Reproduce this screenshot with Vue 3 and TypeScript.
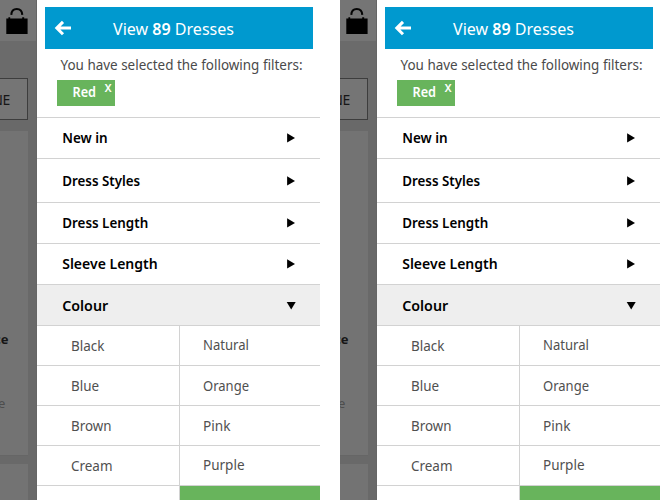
<script setup lang="ts">
interface Row { label: string; height: number; fit: number; open?: boolean }
interface Colour { label: string; fit: number; raised?: boolean }

const screens: number[] = [1, 2]
const rows: Row[] = [
  { label: 'New in', height: 41, fit: 45.5 },
  { label: 'Dress Styles', height: 44, fit: 78 },
  { label: 'Dress Length', height: 41, fit: 86 },
  { label: 'Sleeve Length', height: 41, fit: 95.5 },
  { label: 'Colour', height: 41, fit: 46, open: true },
]
const colours: Colour[] = [
  { label: 'Black', fit: 33.5 },
  { label: 'Natural', fit: 46, raised: true },
  { label: 'Blue', fit: 28 },
  { label: 'Orange', fit: 46 },
  { label: 'Brown', fit: 40.5 },
  { label: 'Pink', fit: 27.5 },
  { label: 'Cream', fit: 41.5 },
  { label: 'Purple', fit: 41.5, raised: true },
]
</script>

<template>
  <main class="board">
    <section v-for="screen in screens" :key="screen" class="phone">
      <aside class="backdrop">
        <div class="topbar">
          <svg class="bag" width="22" height="27" viewBox="0 0 22 27">
            <path d="M0.3 10.4H2.4V9.2H4.2V10.4H16.2V9.2H18.2V10.4H21.6V25.9H0.3Z" fill="#000" />
            <path d="M5.3 6.9C5.4 3 7.5 0.9 10.8 0.9S16.1 3 16.3 6.9" fill="none" stroke="#050505" stroke-width="2" />
          </svg>
        </div>
        <div class="toolbar"><div class="outline">NE</div></div>
        <div class="product">
          <span class="name">ce</span>
          <span class="price">e</span>
        </div>
        <div class="product next"></div>
      </aside>
      <div class="panel">
        <header class="title">
          <svg class="back" width="17" height="15" viewBox="0 0 17 15">
            <path d="M8 0.9L1.8 7.1L8 13.3M2 7.1H16" fill="none" stroke="#fff" stroke-width="3" />
          </svg>
          <svg class="fitted" width="124" height="28">
            <text x="1" y="21" textLength="121" lengthAdjust="spacingAndGlyphs">View <tspan class="count">89</tspan> Dresses</text>
          </svg>
        </header>
        <div class="selection">
          <svg class="intro" width="245" height="20">
            <text x="0.5" y="14" textLength="242" lengthAdjust="spacingAndGlyphs">You have selected the following filters:</text>
          </svg>
          <div class="tag">
            <svg width="26" height="20"><text x="0.5" y="14.4" textLength="23.5" lengthAdjust="spacingAndGlyphs">Red</text></svg>
            <svg class="close" width="8" height="14"><text x="-0.6" y="9.2" textLength="7.2" lengthAdjust="spacingAndGlyphs">x</text></svg>
          </div>
        </div>
        <div
          v-for="row in rows"
          :key="row.label"
          class="row"
          :class="{ open: row.open }"
          :style="{ height: row.height + 'px' }"
        >
          <svg class="label" width="110" height="20">
            <text x="0.2" y="15" :textLength="row.fit" lengthAdjust="spacingAndGlyphs">{{ row.label }}</text>
          </svg>
          <svg class="arrow" width="10" height="10" viewBox="0 0 10 10">
            <path :d="row.open ? 'M0.7 1H9.7L5.2 8.6Z' : 'M1.1 0.3V9.5L9 4.9Z'" />
          </svg>
        </div>
        <div class="colours">
          <div v-for="colour in colours" :key="colour.label" class="cell" :class="{ raised: colour.raised }">
            <svg width="70" height="20">
              <text x="0" y="15" :textLength="colour.fit" lengthAdjust="spacingAndGlyphs">{{ colour.label }}</text>
            </svg>
          </div>
          <div class="cell"></div>
          <div class="cell chosen"></div>
        </div>
      </div>
    </section>
  </main>
</template>

<style>
body { background: #fff; overflow: hidden; }
</style>

<style scoped>
* { box-sizing: border-box; }
svg { display: block; flex: none; overflow: visible; }
.board { display: flex; gap: 20px; width: 660px; height: 500px; overflow: hidden; font-family: "Noto Sans", "Open Sans", sans-serif; }
.phone { display: flex; width: 320px; height: 500px; overflow: hidden; }
.backdrop { width: 37px; height: 500px; flex: none; overflow: hidden; background: #696969; border-right: 1px solid #666; }
.topbar { height: 41px; padding: 8px 0 0 6px; background: #757575; }
.toolbar { height: 79px; padding-top: 37px; background: #6b6b6b; }
.outline { width: 28px; height: 42px; border: 1px solid #3d3d3d; border-left: 0; background: #757575; display: flex; align-items: center; justify-content: flex-end; padding-right: 17px; color: #161616; font-size: 14px; letter-spacing: -0.3px; }
.product { width: 28px; height: 325px; margin-top: 11px; background: #737373; border-bottom: 1px solid #666; display: flex; flex-direction: column; }
.name { margin: 198px 0 0 -6px; color: #161616; font: bold 13px/20px "Noto Sans", sans-serif; }
.price { margin: 44px 0 0 -2px; color: #4d4d4d; font: 13px/20px "Noto Sans", sans-serif; }
.next { margin-top: 8px; height: 50px; }
.panel { width: 283px; flex: none; background: #fff; padding-top: 7px; }
.title { display: flex; align-items: center; width: 268px; height: 42px; margin-left: 8px; padding-left: 10px; background: #0099cf; }
.title .fitted { margin-left: 40px; }
.title text { fill: #fff; font-size: 16.8px; }
.title .count { font-weight: 600; }
.selection { height: 69px; padding: 7px 0 0 20px; border-bottom: 1px solid #d2d2d2; }
.intro { margin-left: 3px; }
.intro text { fill: #4a4a4a; font-size: 14.4px; }
.tag { display: flex; width: 58px; height: 26px; margin-top: 4px; padding: 3px 0 0 15px; background: #68b45c; }
.tag text { fill: #fff; font-size: 14px; font-weight: 600; }
.tag .close { margin-left: 7px; }
.tag .close text { font-size: 14.5px; font-weight: 500; }
.row { display: flex; align-items: center; justify-content: space-between; padding: 0 24px 0 25px; border-bottom: 1px solid #d2d2d2; }
.row text { fill: #000; font-size: 14px; font-weight: 560; }
.arrow { fill: #000; }
.open { background: #eee; padding-top: 2px; }
.colours { display: grid; grid-template-columns: 143px 140px; grid-auto-rows: 40px; }
.cell { display: flex; align-items: center; padding-left: 34px; border-bottom: 1px solid #d2d2d2; }
.cell:nth-child(odd) { border-right: 1px solid #d2d2d2; }
.cell:nth-child(even) { padding-left: 23px; }
.cell text { fill: #505050; font-size: 14px; }
.raised { padding-bottom: 2px; }
.chosen { background: #68b45c; }
</style>
